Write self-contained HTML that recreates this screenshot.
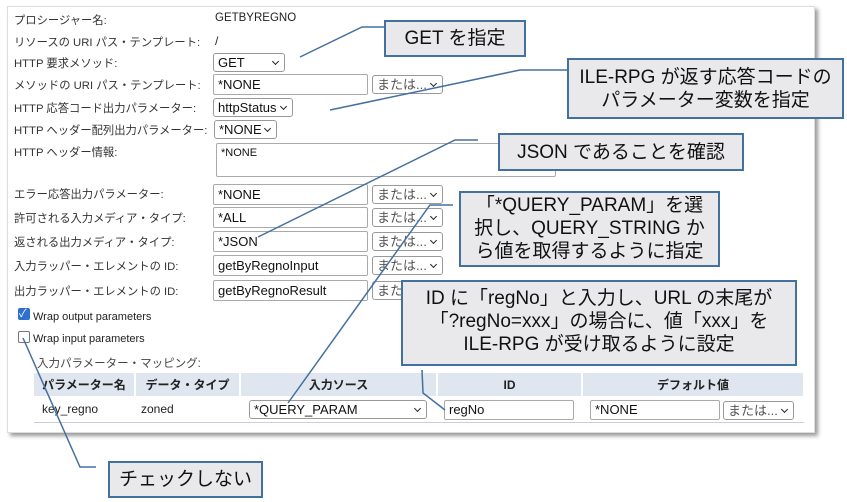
<!DOCTYPE html>
<html><head><meta charset="utf-8"><style>
*{box-sizing:border-box;margin:0;padding:0}
body{width:847px;height:502px;background:#fff;position:relative;overflow:hidden;font-family:"Liberation Sans","Noto Sans CJK JP",sans-serif;font-size:12px;color:#222}
.panel{position:absolute;left:7px;top:6px;width:808px;height:427px;border:1px solid #ddd;box-shadow:3px 3px 4px #999;background:#fff}
.a{position:absolute;white-space:nowrap}
.lab{left:14px;color:#333;font-size:11.3px}
.in{position:absolute;height:21px;border:1px solid #aaa;border-radius:2px;background:#fff;font-size:13px;padding:2px 4px;line-height:15px;white-space:nowrap;color:#111}
.sel{position:absolute;height:19px;border:1px solid #999;border-radius:3px;background:#fff;font-size:13px;padding:1px 4px;line-height:15px;white-space:nowrap;color:#111}
.sel::after{content:"";position:absolute;right:6px;top:5px;width:4px;height:4px;border-right:1.5px solid #222;border-bottom:1.5px solid #222;transform:rotate(45deg)}
.or{width:71px;color:#555}
.box{position:absolute;background:#e9e9ec;border:2px solid #44709f;font-size:19px;color:#111;text-align:center;line-height:23px;white-space:nowrap}
table{position:absolute;left:34px;top:373px;width:771px;border-collapse:collapse;font-size:12px}
th{background:#dfe6ef;height:23px;font-weight:bold;border-right:2px solid #fff}
td{height:26px;background:#fff;border-bottom:1px solid #ccd}
.cb{position:absolute;width:12px;height:12px;border-radius:2px}
</style></head><body>
<div class="panel"></div>
<div class="a lab" style="top:12px">プロシージャー名:</div><div class="a" style="left:215px;top:12px;font-size:11.5px">GETBYREGNO</div>
<div class="a lab" style="top:34px">リソースの URI パス・テンプレート:</div><div class="a" style="left:215px;top:34px">/</div>
<div class="a lab" style="top:55px">HTTP 要求メソッド:</div><div class="sel" style="left:213px;top:53px;width:72px">GET</div>
<div class="a lab" style="top:77px">メソッドの URI パス・テンプレート:</div><div class="in" style="left:213px;top:74px;width:155px">*NONE</div><div class="sel or" style="left:372px;top:75px">または...</div>
<div class="a lab" style="top:100px">HTTP 応答コード出力パラメーター:</div><div class="sel" style="left:213px;top:98px;width:80px">httpStatus</div>
<div class="a lab" style="top:122px">HTTP ヘッダー配列出力パラメーター:</div><div class="sel" style="left:214px;top:120px;width:63px">*NONE</div>
<div class="a lab" style="top:144px">HTTP ヘッダー情報:</div><div class="in" style="left:216px;top:143px;width:340px;height:34px;font-size:11px">*NONE</div>
<div class="a lab" style="top:186px">エラー応答出力パラメーター:</div><div class="in" style="left:213px;top:184px;width:155px">*NONE</div><div class="sel or" style="left:372px;top:185px">または...</div>
<div class="a lab" style="top:210px">許可される入力メディア・タイプ:</div><div class="in" style="left:213px;top:207px;width:155px">*ALL</div><div class="sel or" style="left:372px;top:208px">または...</div>
<div class="a lab" style="top:234px">返される出力メディア・タイプ:</div><div class="in" style="left:213px;top:231px;width:155px">*JSON</div><div class="sel or" style="left:372px;top:232px">または...</div>
<div class="a lab" style="top:258px">入力ラッパー・エレメントの ID:</div><div class="in" style="left:213px;top:255px;width:155px">getByRegnoInput</div><div class="sel or" style="left:372px;top:256px">または...</div>
<div class="a lab" style="top:283px">出力ラッパー・エレメントの ID:</div><div class="in" style="left:213px;top:280px;width:155px">getByRegnoResult</div><div class="sel or" style="left:372px;top:281px">または...</div>
<div class="cb" style="left:18px;top:308px;background:#2f6fd0"></div><div class="a" style="left:19px;top:305px;color:#fff;font-size:11px">✓</div>
<div class="a" style="left:33px;top:311px;font-size:11px">Wrap output parameters</div>
<div class="cb" style="left:18px;top:331px;border:1px solid #777"></div>
<div class="a" style="left:33px;top:333px;font-size:11px">Wrap input parameters</div>
<div class="a" style="left:37px;top:355px;color:#444;font-size:11.5px">入力パラメーター・マッピング:</div>
<table><tr><th style="width:101px">パラメーター名</th><th style="width:105px">データ・タイプ</th><th style="width:197px">入力ソース</th><th style="width:145px">ID</th><th>デフォルト値</th></tr>
<tr><td style="padding-left:8px">key_regno</td><td style="padding-left:6px">zoned</td><td></td><td></td><td></td></tr></table>
<div class="sel" style="left:249px;top:400px;width:178px">*QUERY_PARAM</div>
<div class="in" style="left:444px;top:400px;width:130px;height:20px;padding-top:1px">regNo</div>
<div class="in" style="left:590px;top:400px;width:130px;height:20px;padding-top:1px">*NONE</div>
<div class="sel or" style="left:723px;top:401px">または...</div>
<svg class="a" style="left:0;top:0" width="847" height="502"><g stroke="#44709f" stroke-width="1.5" fill="none">
<polyline points="300,57 362,27 384,27"/><polyline points="330,110 520,70 567,70"/><polyline points="258,237 455,140 478,140"/><polyline points="288,403 430,205 453,205"/><polyline points="422,370 423,393 445,410"/><polyline points="23,338 80,467 96,467"/></g></svg>
<div class="box" style="left:384px;top:20px;width:142px;height:37px;padding-top:5px">GET を指定</div>
<div class="box" style="left:567px;top:58px;width:277px;height:61px;padding-top:6px">ILE-RPG が返す応答コードの<br>パラメーター変数を指定</div>
<div class="box" style="left:498px;top:133px;width:246px;height:38px;padding-top:6px">JSON であることを確認</div>
<div class="box" style="left:459px;top:191px;width:261px;height:76px;padding-top:1px">「*QUERY_PARAM」を選<br>択し、QUERY_STRING か<br>ら値を取得するように指定</div>
<div class="box" style="left:401px;top:280px;width:396px;height:86px;padding-top:5px">ID に「regNo」と入力し、URL の末尾が<br>「?regNo=xxx」の場合に、値「xxx」を<br>ILE-RPG が受け取るように設定</div>
<div class="box" style="left:108px;top:461px;width:155px;height:37px;padding-top:5px">チェックしない</div>
</body></html>
